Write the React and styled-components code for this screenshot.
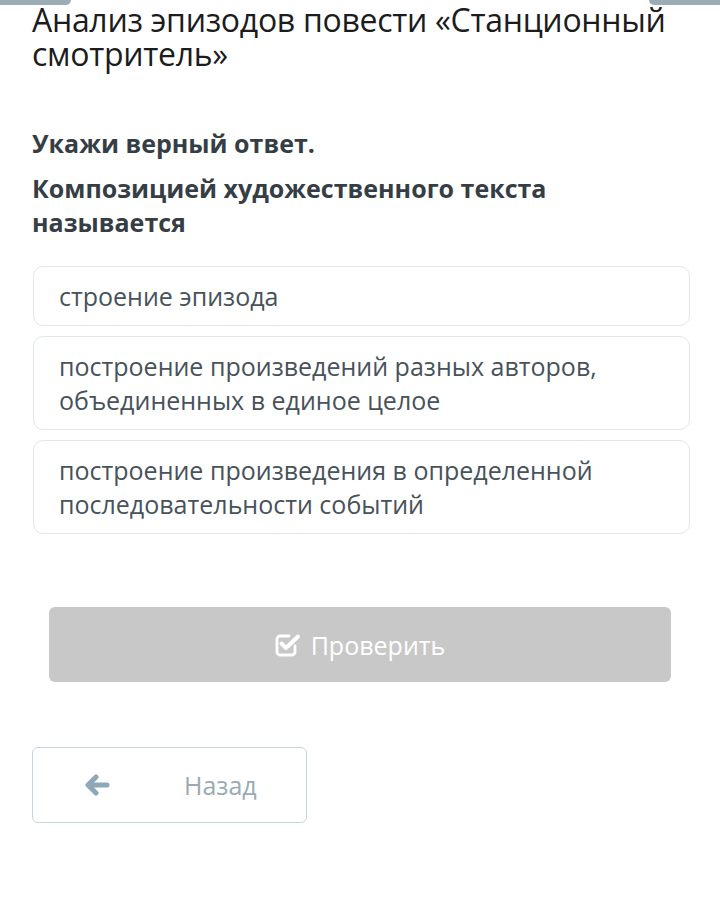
import styled, { createGlobalStyle } from "styled-components";

const GlobalStyle = createGlobalStyle`
  body {
    margin: 0;
    background: #ffffff;
    font-family: "Open Sans", "Noto Sans", sans-serif;
  }
`;

const options = [
  "строение эпизода",
  "построение произведений разных авторов, объединенных в единое целое",
  "построение произведения в определенной последовательности событий",
];

function CheckSquareIcon() {
  return (
    <svg width="26" height="24" viewBox="0 0 26 24" fill="none">
      <path d="M20 13 V19 a3 3 0 0 1 -3 3 H5 a3 3 0 0 1 -3 -3 V6 a3 3 0 0 1 3 -3 H14" stroke="#ffffff" strokeWidth="2.8" strokeLinecap="round" />
      <path d="M6.5 10.5 L11 15 L23 3.5" stroke="#ffffff" strokeWidth="4" strokeLinecap="round" strokeLinejoin="round" />
    </svg>
  );
}

function ArrowLeftIcon() {
  return (
    <svg width="26" height="22" viewBox="0 0 26 22" fill="none">
      <path d="M23 11 H5 M12 3 L4 11 L12 19" stroke="#8fa8b8" strokeWidth="5" strokeLinecap="round" strokeLinejoin="round" />
    </svg>
  );
}

function App() {
  return (
    <>
      <GlobalStyle />
      <Page>
        <TopTabs>
          <Tab $side="left" />
          <Tab $side="right" />
        </TopTabs>
        <Title>Анализ эпизодов повести «Станционный смотритель»</Title>
        <Instruction>Укажи верный ответ.</Instruction>
        <Question>Композицией художественного текста называется</Question>
        <OptionList>
          {options.map((text) => (
            <Option key={text}>{text}</Option>
          ))}
        </OptionList>
        <CheckButton>
          <CheckSquareIcon />
          Проверить
        </CheckButton>
        <BackButton>
          <ArrowLeftIcon />
          <span>Назад</span>
        </BackButton>
      </Page>
    </>
  );
}

export default App;

const Page = styled.div`
  position: relative;
  width: 720px;
  min-height: 918px;
  padding: 0 30px 0 32px;
  box-sizing: border-box;
  display: flex;
  flex-direction: column;
`;

const TopTabs = styled.div`
  position: absolute;
  top: 0;
  left: 0;
  right: 0;
  display: flex;
  justify-content: space-between;
`;

const Tab = styled.div`
  width: 71px;
  height: 5px;
  background: #9aadb5;
  border-radius: ${(p) => (p.$side === "left" ? "0 0 8px 0" : "0 0 0 8px")};
`;

const Title = styled.h1`
  margin: 3px 0 0;
  font-weight: 400;
  font-size: 32px;
  line-height: 34px;
  color: #1c1c1c;
  letter-spacing: -0.3px;
`;

const Instruction = styled.h2`
  margin: 56px 0 0;
  font-weight: 700;
  font-size: 25px;
  line-height: 32px;
  color: #363e45;
`;

const Question = styled.h2`
  margin: 12px 0 0;
  font-weight: 700;
  font-size: 25px;
  line-height: 34px;
  color: #363e45;
`;

const OptionList = styled.div`
  margin-top: 27px;
  display: flex;
  flex-direction: column;
  gap: 10px;
  padding-left: 1px;
`;

const Option = styled.div`
  border: 1px solid #dfe7ea;
  border-radius: 10px;
  padding: 12px 26px 12px 25px;
  font-size: 25px;
  line-height: 34px;
  color: #47525b;
`;

const CheckButton = styled.button`
  margin: 73px 19px 0 17px;
  height: 75px;
  border: none;
  border-radius: 6px;
  background: #c8c8c8;
  color: #ffffff;
  font-family: "Open Sans", "Noto Sans", sans-serif;
  font-size: 25px;
  display: flex;
  align-items: center;
  justify-content: center;
  gap: 10px;
`;

const BackButton = styled.button`
  margin-top: 65px;
  width: 275px;
  height: 76px;
  border: 1px solid #c5d4da;
  border-radius: 6px;
  background: #ffffff;
  color: #9aabb5;
  font-family: "Open Sans", "Noto Sans", sans-serif;
  font-size: 25px;
  display: flex;
  align-items: center;
  padding: 0 0 0 51px;
  gap: 74px;
`;
